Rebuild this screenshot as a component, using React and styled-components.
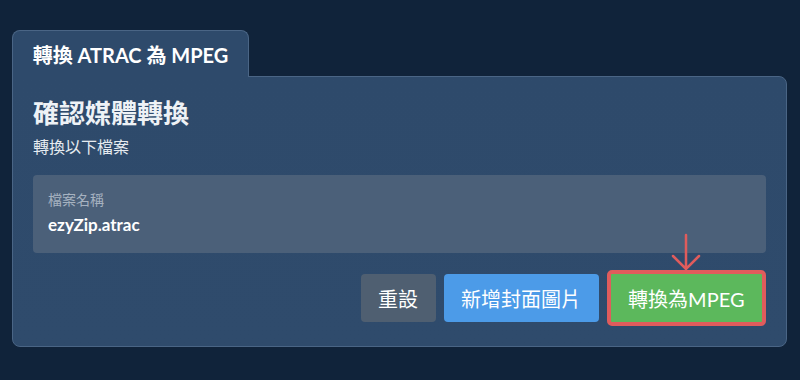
import React from "react";
import styled, { createGlobalStyle } from "styled-components";

const Global = createGlobalStyle`
  html, body { margin: 0; padding: 0; background: #10233a; }
  body { font-family: Lato, "Noto Sans CJK TC", sans-serif; color: #fff; }
  * { box-sizing: border-box; }
`;

const Page = styled.div`
  width: 800px;
  height: 380px;
  padding: 30px 13px 0 12px;
`;

const Tab = styled.div`
  width: 237px;
  height: 47px;
  display: flex;
  align-items: center;
  justify-content: center;
  background: #2e4a6b;
  border: 1px solid #4a6585;
  border-bottom: none;
  border-radius: 8px 8px 0 0;
  font-size: 20px;
  font-weight: 700;
  color: #fff;
  position: relative;
  z-index: 1;
  margin-bottom: -1px;
`;

const Panel = styled.div`
  background: linear-gradient(180deg, #2e4a6b 0%, #2f4b6c 100%);
  border: 1px solid #4a6585;
  border-radius: 0 8px 8px 8px;
  padding: 20px 20px 20px 20px;
  display: flex;
  flex-direction: column;
`;

const Heading = styled.h2`
  margin: 0;
  font-size: 26px;
  font-weight: 700;
  line-height: 32px;
  color: #eef2f6;
`;

const Sub = styled.p`
  margin: 8px 0 0;
  font-size: 16px;
  line-height: 20px;
  color: #e6ebf0;
`;

const FileBox = styled.div`
  margin-top: 18px;
  height: 78px;
  background: #4b6079;
  border-radius: 4px;
  padding: 16px 15px 0;
  display: flex;
  flex-direction: column;
  gap: 6px;
`;

const FileLabel = styled.div`
  font-size: 14px;
  line-height: 18px;
  color: #a6b2c0;
`;

const FileName = styled.div`
  font-size: 17px;
  line-height: 20px;
  font-weight: 700;
  color: #fff;
`;

const Actions = styled.div`
  margin-top: 17px;
  display: flex;
  justify-content: flex-end;
  align-items: center;
  gap: 8px;
`;

const Button = styled.button`
  height: ${(p) => (p.$highlight ? 56 : 48)}px;
  padding: 0 17.5px;
  border-radius: ${(p) => (p.$highlight ? 5 : 4)}px;
  border: ${(p) => (p.$highlight ? "4px solid #e05c5c" : "none")};
  background: ${(p) => p.$bg};
  color: #fff;
  font-family: Lato, "Noto Sans CJK TC", sans-serif;
  font-size: 20px;
  font-weight: 400;
  cursor: pointer;
  position: relative;
`;

const Arrow = styled.svg`
  position: absolute;
  left: 50%;
  top: -40px;
  transform: translateX(-50%);
  overflow: visible;
`;

export default function App() {
  return (
    <>
      <Global />
      <Page>
        <Tab>轉換 ATRAC 為 MPEG</Tab>
        <Panel>
          <Heading>確認媒體轉換</Heading>
          <Sub>轉換以下檔案</Sub>
          <FileBox>
            <FileLabel>檔案名稱</FileLabel>
            <FileName>ezyZip.atrac</FileName>
          </FileBox>
          <Actions>
            <Button $bg="#4f5f71">重設</Button>
            <Button $bg="#4c9be8">新增封面圖片</Button>
            <Button $bg="#5cb85c" $highlight>
              <Arrow width="30" height="38" viewBox="0 0 30 38">
                <path d="M15 1 V35 M2 22 L15 35 L28 22" fill="none" stroke="#e05c5c" strokeWidth="2.5" strokeLinecap="round" strokeLinejoin="miter" />
              </Arrow>
              轉換為MPEG
            </Button>
          </Actions>
        </Panel>
      </Page>
    </>
  );
}
